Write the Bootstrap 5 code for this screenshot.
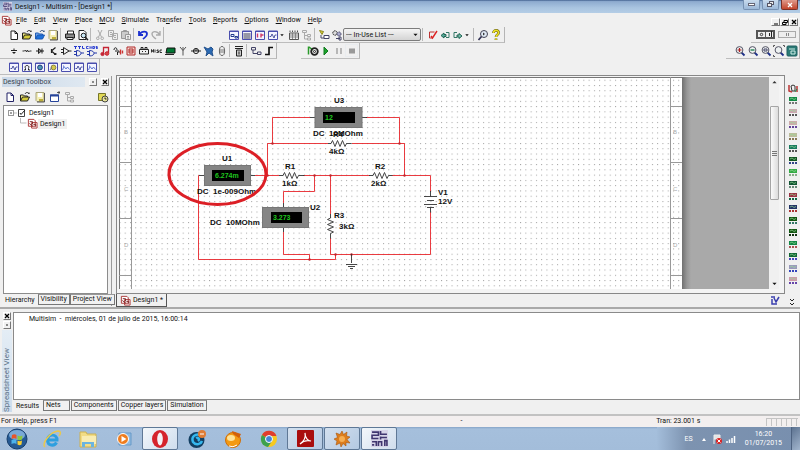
<!DOCTYPE html>
<html lang="en">
<head>
<meta charset="utf-8">
<meta name="viewport" content="width=device-width, initial-scale=1">
<title>Design1 - Multisim - [Design1 *]</title>
<link href="https://cdn.jsdelivr.net/npm/bootstrap@5.3.0/dist/css/bootstrap.min.css" rel="stylesheet">
<style>
body{font:7px/10px Roboto,"Open Sans",sans-serif;color:#111;background:#f0f0f0;min-height:100vh}
button,select{font:inherit;color:inherit;background:none;border:0;padding:0;white-space:nowrap}
a{color:inherit;text-decoration:none}
svg{display:block;flex:none}
.ic{width:12px;height:12px;fill:none;stroke:#222;stroke-width:1}
.ic.s5{width:5px;height:5px}
.ic.s9{width:9px;height:9px}
.ic.s11{width:11px;height:11px}
.drop{width:4px;height:4px;margin:0 3px 0 1px}
.navy{stroke:#226}
.tb{width:13px;height:13px;display:flex;align-items:center;justify-content:center;flex:none}
.tb.apart{margin:0 3px 0 1px}
.titlebar{height:13px;padding-left:3px;gap:3px;background:linear-gradient(#42618f 0,#8eabcf 12%,#a9c4e0 60%,#b4cde6)}
.winbtns{gap:2px;padding-right:2px}
.wb{width:17px;height:10px;border:1px solid #7791b2;border-top:0;border-radius:0 0 2px 2px;background:linear-gradient(#c9dbee,#9cb8d8);display:flex;align-items:center;justify-content:center}
.wb.end{background:linear-gradient(#e09a8c,#c3452c);border-color:#7c3026}
.menubar{height:14px;padding-left:1px}
.menubar a{padding-right:7px}
.menubar u{text-underline-offset:1px}
.menus{padding-left:4px}
.trow{height:16px}
.tbar{height:16px;padding:0 1px 0 7px;border-right:1px solid #b5b5b5;border-bottom:1px solid #bdbdbd;display:flex;align-items:center}
.tbar.std{width:164px}
.tbar.main{margin-left:58px;padding:0 2px 0 5px}
.tbar.simbar{margin-left:20px;padding:0 1px 0 5px}
.tbar.switches{padding:0 3px 0 5px;gap:3px}
.vsep{width:1px;height:13px;background:#b8b8b8;margin:0 2px 0 1px;flex:none}
.uselist{width:78px;height:13px;border:1px solid #7c7c7c;border-radius:2px;background:linear-gradient(#f4f4f4,#d4d4d4);appearance:none;padding:0 2px}
.pick{display:grid}
.pick>*{grid-area:1/1}
.pick svg{justify-self:end;align-self:center;margin-right:3px;pointer-events:none}
.mdi{padding:3px 2px 0 0}
.mdi button{width:9px;height:8px;border:1px solid;border-color:#fff #777 #777 #fff;display:flex;align-items:center;justify-content:center}
.toolbox{width:110px;margin:1px 0 1px 2px;border-right:1px solid #9a9a9a}
.panelhead{height:11px;margin-right:2px}
.panelhead h2{font:inherit;font-size:7px;margin:0;padding-left:1px;color:#36424e;background:linear-gradient(90deg,#cbd9e8,#dfe8f1);line-height:10px;height:10px}
.boxtools{height:18px;padding:0 2px 2px 1px;gap:2px}
.mini{width:8px;height:8px;border:1px solid;border-color:#fff #777 #777 #fff;display:flex;align-items:center;justify-content:center;flex:none}
.tree{background:#fff;border:1px solid #8c8c8c;margin:0 3px 0 1px;padding:2px 4px}
.leaf{background:#f0f0f0;padding:0 2px}
.tab{height:11px;border:1px solid #777;border-top-color:#999;line-height:9px;padding:0 2px;background:#f1f1f1}
.tab.on{border-color:transparent;height:12px}
.tabs{gap:1px}
.toolbox .tabs{gap:0}
.docs{margin-left:4px;min-width:0}
.desk{border:1px solid #888;background:#f4f4f4;padding:1px 2px 4px}
.sheet{width:563px;background:#fff}
.beyond{background:linear-gradient(90deg,#707070 0,#979797 5px,#a9a9a9 9px)}
.scroll{width:10px;background:#f0f0f0;margin-right:3px;padding:3px 0}
.thumb{height:94px;width:9px;margin-top:21px;border:1px solid #a5a5a5;border-radius:1px;background:linear-gradient(90deg,#fafafa,#dcdcdc)}
.doctab{height:13px;border:1px solid #555;border-top:0;line-height:12px;padding:0 3px;gap:2px}
.instr{width:15px;padding-top:7px}
.instr button{height:12px}
.more{order:99;width:7px;height:9px}
.sheetview{border-top:2px solid #aaa;height:105px;padding-top:3px}
.grip{width:13px;gap:1px}
.vlabel{writing-mode:vertical-rl;transform:rotate(180deg);font-size:8px;color:#5d7388;background:linear-gradient(#cddded,#e4edf5);width:10px;line-height:10px}
.log{background:#fff;border:1px solid #8a8a8a;padding:1px 15px}
.status{height:13px;margin-top:2px;padding-left:1px;background:#f3efef;border-top:2px solid #c2c2c2;line-height:11px}
.c1{width:57.5%}.c2{width:24.5%}
.locks{width:32px;border:solid #c4c4c4;border-width:1px 0 0;background:repeating-linear-gradient(90deg,#c4c4c4 0 1px,transparent 1px 5px);margin:2px 2px 1px 0}
.taskbar{height:23px;background:linear-gradient(#86a4c8 0,#a5bfdc 2px,#a3bdda)}
.task{width:36px;height:23px;display:flex;align-items:center;justify-content:center;flex:none;border:1px solid transparent}
.task.start{width:34px}
.task.open{border-color:#5f7896;background:linear-gradient(135deg,#d3e0ef,#b4c9e2);border-radius:2px;margin-right:1px}
.task.front{background:linear-gradient(135deg,#f3f7fb,#cfdded)}
.tray{background:linear-gradient(90deg,#a3bdda 0,#7d93b0 30px,#788fae);color:#fff;gap:9px;padding-left:28px}
.clock{line-height:9px}
.peek{width:9px;background:linear-gradient(135deg,#5b718f,#a2b6ce);border-left:1px solid #4d6280}
.sch text{font:bold 8px "Liberation Sans",Arial,sans-serif;fill:#111;white-space:pre}
.sch .lcd{font:bold 7px "Liberation Sans",Arial,sans-serif;fill:#1fc61f}
.sch .rule{font:6px "Liberation Sans",Arial,sans-serif;fill:#aaa}
</style>
<script src="https://cdn.jsdelivr.net/npm/bootstrap@5.3.0/dist/js/bootstrap.bundle.min.js"></script>
</head>
<body class="d-flex flex-column">
<svg width="0" height="0" class="position-absolute" aria-hidden="true"><defs>
<symbol id="new" viewBox="0 0 12 12"><path d="M3 2h4l2.500 2.500V10.500H3z" fill="#fff"/><path d="M7 2v2.500h2.500"/></symbol>
<symbol id="open" viewBox="0 0 12 12"><path d="M1.500 10V4h3l1 1h3v1.500" fill="#f5ee80"/><path d="M1.500 10l2-4h7l-2 4z" fill="#d4cb3b"/><path d="M6 3c1-2 3-2 4 0V1.500"/></symbol>
<symbol id="openb" viewBox="0 0 12 12"><path d="M1.500 10V4h3l1 1h3v1.500" fill="#71a4ea" stroke="#225db4"/><path d="M1.500 10l2-4h7l-2 4z" fill="#1e72dc" stroke="#1a57b0"/><path d="M6 3c1-2 3-2 4 0V1.500" stroke="#247"/></symbol>
<symbol id="save" viewBox="0 0 12 12"><path d="M2 1.500h8v9H3l-1-1z" fill="#f3edb6" stroke="#aaa67c"/><path d="M4 2h4v4H4z" fill="#fff" stroke="none"/><path d="M5 8h4v2.500H5z" fill="#bcae3a" stroke="none"/><path d="M10.500 2v9H3" stroke="#555"/></symbol>
<symbol id="print" viewBox="0 0 12 12"><path d="M3.500 5V2h6v3" fill="#fff"/><path d="M1.500 5h9v4h-9z" fill="#888"/><path d="M3 8.500h6v2H3z" fill="#eee"/></symbol>
<symbol id="prev" viewBox="0 0 12 12"><path d="M2 1.500h5l2 2v7H2z" fill="#fff"/><circle cx="6.500" cy="6.500" r="2.300" fill="#c8e6f4"/><path d="M8 8l3 3" stroke-width="1.500"/></symbol>
<symbol id="cut" viewBox="0 0 12 12"><g stroke="#aaa"><path d="M4 1l3.500 7M8 1L4.500 8"/><circle cx="3.800" cy="9.300" r="1.300"/><circle cx="8.200" cy="9.300" r="1.300"/></g></symbol>
<symbol id="copy" viewBox="0 0 12 12"><g stroke="#aaa" fill="#eee"><path d="M1.500 1.500h5v6h-5zM5.500 4.500h5v6h-5z"/><path d="M3 3.500h2M3 5.500h2M7 6.500h2M7 8.500h2"/></g></symbol>
<symbol id="paste" viewBox="0 0 12 12"><g stroke="#999" fill="#ccc"><path d="M1.500 2.500h7v7h-7zM3.500 1.500h3v1h-3z"/><path d="M5.500 5.500h5v5h-5z" fill="#eee"/><path d="M7 7.500h2M7 9h2"/></g></symbol>
<symbol id="undo" viewBox="0 0 12 12"><path d="M2 2v4h4M2.500 5.500C5 1.500 10 2 10 5S7.500 8.500 6 10" stroke="#1a2fd0" stroke-width="1.800"/></symbol>
<symbol id="redo" viewBox="0 0 12 12"><path d="M10 2v4H6M9.500 5.500C7 1.500 2 2 2 5S4.500 8.500 6 10" stroke="#aaa" stroke-width="1.400"/></symbol>
<symbol id="win" viewBox="0 0 12 12"><path d="M1.500 2h9v8.500h-9z" fill="#f3f4ff" stroke="#4a4eae"/><path d="M1 2.500h10" stroke="#4a4eae"/></symbol>
<symbol id="w1" viewBox="0 0 12 12"><use href="#win"/><path d="M3 5.500h3v2H3zM7 7.500h2.500v1.500H7z" stroke="#223a8c"/></symbol>
<symbol id="w2" viewBox="0 0 12 12"><use href="#win"/><path d="M2 5h8M2 7h8M2 9h8M4 4v6M6 4v6M8 4v6" stroke="#556" stroke-width=".7"/></symbol>
<symbol id="w3" viewBox="0 0 12 12"><use href="#win"/><path d="M3.500 4.500v4M7 4.500v4M7 6h2.500" stroke="#d23a66" stroke-width="1.400"/></symbol>
<symbol id="w4" viewBox="0 0 12 12"><use href="#win"/><path d="M2.500 7.500h1.500l1-2.500 2 4 1-3h1.500" stroke="#28348c" stroke-width=".8"/></symbol>
<symbol id="w5" viewBox="0 0 12 12"><use href="#win"/><path d="M4.500 9V7.500c-2-4 5-4 3 0V9M3 9h1.500M7.500 9H9" stroke="#222"/></symbol>
<symbol id="w6" viewBox="0 0 12 12"><use href="#win"/><circle cx="6" cy="6.500" r="2.400" fill="#4f9ab4" stroke="#223a7c"/></symbol>
<symbol id="w7" viewBox="0 0 12 12"><use href="#win"/><circle cx="6.500" cy="6.500" r="2.400" fill="#d6ca4a" stroke="#8a8440"/><path d="M3 9l2-3" stroke="#777"/></symbol>
<symbol id="w8" viewBox="0 0 12 12"><use href="#win"/><path d="M2.500 9l1.500-3.500 2 2.500 1.500-2 2 2.500M3 5h1" stroke="#3d5cc8" stroke-width=".8"/></symbol>
<symbol id="grid" viewBox="0 0 12 12"><path d="M1.500 4h9v6.500h-9zM2 3V1.500M4.500 3V1.500M7 3V1.500M9.500 3V1.500" stroke="#555"/><path d="M2 6h8M2 8h8M4.500 4v6M7.500 4v6" stroke="#777" stroke-width=".8"/></symbol>
<symbol id="hier" viewBox="0 0 12 12"><g stroke="#aaa"><path d="M1.500 1.500h4v2h-4zM6.500 5.500h3v2h-3zM6.500 9h3v2h-3zM3.500 4v6h3M3.500 6.500h3"/></g></symbol>
<symbol id="par" viewBox="0 0 12 12"><path d="M1.500 1.500l4 1-1.500 3z" fill="#e0d838" stroke="#8b8520"/><path d="M3 6v3h3M6 6.500h5v3H6z" fill="#fff" stroke="#446"/></symbol>
<symbol id="gears" viewBox="0 0 12 12"><circle cx="4" cy="4" r="2.200" fill="#ddd" stroke-dasharray="1.500 .6"/><circle cx="8" cy="5" r="2" fill="#aac" stroke="#446" stroke-dasharray="1.500 .6"/><path d="M5 9.500h4M8 8v3h2V8z" fill="#fff" stroke="#446"/></symbol>
<symbol id="erc" viewBox="0 0 12 12"><path d="M3.500 3h5M3.500 3v6h3V8" stroke="#b33"/><path d="M5 7l1.500 2L11 2" stroke="#d22" stroke-width="1.400"/></symbol>
<symbol id="fwd" viewBox="0 0 12 12"><path d="M2 6.500l3-2.500v1.500h2v2H5V9z" fill="#5a9" stroke="#265"/><path d="M7 3.500h3v5H7" stroke="#376"/></symbol>
<symbol id="bck" viewBox="0 0 12 12"><path d="M5 3.500H2v5h3" stroke="#376"/><path d="M10 7L7 4.500V6H5v2h2v1.500z" fill="#7ba" stroke="#265"/></symbol>
<symbol id="find" viewBox="0 0 12 12"><circle cx="7" cy="5" r="3.500" fill="#dfe9f4" stroke="#445"/><path d="M4.500 7.500L1.500 11" stroke-width="1.700" stroke="#335"/><path d="M6 3.500v3l2-1.500z" fill="#333" stroke="none"/></symbol>
<symbol id="help" viewBox="0 0 12 12"><path d="M3.500 4c0-3.500 5.500-3.500 5 0 0 2-2.500 1.500-2.500 4M6 9.500v1.500" stroke="#55500a" stroke-width="2.600"/><path d="M3.500 4c0-3.500 5.500-3.500 5 0 0 2-2.500 1.500-2.500 4M6 9.500v1.500" stroke="#ece022" stroke-width="1.600"/></symbol>
<symbol id="src" viewBox="0 0 12 12"><path d="M3 5.500h6M4.500 7.500h3M6 3.500v2M6 7v2"/></symbol>
<symbol id="res" viewBox="0 0 12 12"><path d="M1.500 6h2l1-1 1 2 1-2 1 2 1-1h2" stroke-width=".9"/></symbol>
<symbol id="dio" viewBox="0 0 12 12"><path d="M2 6h8M4.500 3.500v5l3-2.500zM8 3.500v5"/></symbol>
<symbol id="trn" viewBox="0 0 12 12"><path d="M8.500 2.500L5 5.500M5 6.500L8.500 9.500M4.500 4v4M7 9.500h1.800V8" stroke-width="1.200"/></symbol>
<symbol id="amp" viewBox="0 0 12 12"><path d="M3.500 2.500v7L9 6zM1 4.500h2.500M1 7.500h2.500M9 6h2.500"/></symbol>
<symbol id="ttl" viewBox="0 0 12 12"><path d="M3.500 5.500V11c6 0 6-5.500 0-5.500zM1 6.500h2.500M1 9.500h2.500M8 8h3" stroke="#2439aa"/><path d="M1 1.500h3M2.500 1.500v2.500M5 1.500h3M6.500 1.500v2.500M9.500 1v2.500h2" stroke="#2439d0"/></symbol>
<symbol id="cmos" viewBox="0 0 12 12"><path d="M3.500 5.500V11c6 0 6-5.500 0-5.500zM1 6.500h2.500M1 9.500h2.500M8 8h3" stroke="#2439aa"/><path d="M2.500 1.500h-2v2h2M4 4V1.500l1 1 1-1V4M7 1.500h1.500v2H7zM11.500 1.500H10v1h1.500v1H10" stroke="#2439d0" stroke-width=".9"/></symbol>
<symbol id="note" viewBox="0 0 12 12"><path d="M4.500 9V2.500h5V8" stroke="#c42434" stroke-width="1.300"/><circle cx="3.500" cy="9" r="1.600" fill="#c42434" stroke="#c42434"/><circle cx="8" cy="8.500" r="1.800" fill="#d44" stroke="#c42434"/></symbol>
<symbol id="mix" viewBox="0 0 12 12"><path d="M2 5c0-3 3-3 3 0M3 6h4v2M5.500 10V7" stroke="#222"/><path d="M8.500 4.500v5M10.500 5.500v3" stroke="#c33" stroke-width="1.400"/></symbol>
<symbol id="ind" viewBox="0 0 12 12"><path d="M2 2h8v8H2z" stroke="#b12a2a" fill="#f4d6d0"/><path d="M4 4h4v4H4zM4 6h4" stroke="#b12a2a"/></symbol>
<symbol id="pow" viewBox="0 0 12 12"><path d="M1.500 4.500h9v4.500h-9zM3 4V2.500h2V4M7 4V2.500h2V4M4 6.500h1M7 6.500h1"/></symbol>
<symbol id="misc" viewBox="0 0 12 12"><path d="M0.500 7.500v-3l1 2 1-2v3M4 4.500v3M7.500 5H6v1h1.500v1.500H5.500M11 5H9v2.500h2" stroke-width=".9"/></symbol>
<symbol id="lap" viewBox="0 0 12 12"><path d="M3 3h8v5H2z" fill="#073" stroke="#111"/><path d="M1 9.500h9"/></symbol>
<symbol id="ant" viewBox="0 0 12 12"><path d="M3 2l3 3.500L9 2M6 2v8.500" stroke="#555"/></symbol>
<symbol id="mot" viewBox="0 0 12 12"><circle cx="6" cy="6" r="2.600"/><path d="M1 6h10M4.500 5h3"/></symbol>
<symbol id="ni" viewBox="0 0 12 12"><path d="M1 2l4 2 3-2 2 2-1 3 1 4-4-3-3 3 1-4z" fill="#2a6ab4" stroke="#24518c"/></symbol>
<symbol id="conn" viewBox="0 0 12 12"><ellipse cx="6" cy="6" rx="2.600" ry="4.500" stroke="#666"/><path d="M5 4v4M7 4v4" stroke="#777"/></symbol>
<symbol id="mcu" viewBox="0 0 12 12"><path d="M3.500 5h5v6h-5zM6 6.500v3" fill="#ccc"/><path d="M2 1.500h8M2 3.500h8" stroke-width="1.200"/></symbol>
<symbol id="hb" viewBox="0 0 12 12"><path d="M1.500 2.500h4v2.500h-4zM7.500 7h3.500v2.500H7.500zM3 5v3.500h4.500" stroke="#446"/></symbol>
<symbol id="bus" viewBox="0 0 12 12"><path d="M2 9.500h4v-7h4" stroke="#111" stroke-width="1.700"/></symbol>
<symbol id="sim" viewBox="0 0 12 12"><path d="M1.500 1.500v8M2 2l4 3" stroke="#2a9a2a" stroke-width="1.500"/><circle cx="7.500" cy="6.500" r="3.300" stroke-width="1.800"/><circle cx="7.500" cy="6.500" r="1"/></symbol>
<symbol id="run" viewBox="0 0 12 12"><path d="M4 2v8l4-4z" fill="#1ba32c" stroke="#137a20"/></symbol>
<symbol id="pau" viewBox="0 0 12 12"><path d="M4 3v6M8 3v6" stroke="#aaa" stroke-width="1.600"/></symbol>
<symbol id="stp" viewBox="0 0 12 12"><path d="M3 3.500h6v5H3z" fill="#999" stroke="none"/></symbol>
<symbol id="mag" viewBox="0 0 12 12"><path d="M7.500 7.500l3 3" stroke="#1d2f88" stroke-width="1.800"/><circle cx="5.500" cy="5" r="3.400" fill="#eef2f2" stroke="#556"/></symbol>
<symbol id="zin" viewBox="0 0 12 12"><use href="#mag"/><path d="M3.500 5h4M5.500 3v4" stroke="#a22" stroke-width="1.200"/></symbol>
<symbol id="zout" viewBox="0 0 12 12"><use href="#mag"/><path d="M3.500 5h4" stroke="#174" stroke-width="1.300"/></symbol>
<symbol id="zar" viewBox="0 0 12 12"><use href="#mag"/><path d="M4 4h3v2H4z" stroke="#446"/></symbol>
<symbol id="zfit" viewBox="0 0 12 12"><use href="#mag"/><path d="M.5 2V.5H2M10 .5h1.500V2M.5 10v1.500H2" stroke="#555"/></symbol>
<symbol id="full" viewBox="0 0 12 12"><rect x="1" y="1" width="10" height="10" rx="1" fill="#2b7a75" stroke="#1f5f60"/><path d="M3 4h6M5 6h4v3H5z" stroke="#cfeee8"/></symbol>
<symbol id="dsn" viewBox="0 0 12 12"><path d="M1.500 1.500h6l1.500 1.500v6h-7.500zM5 5h6v6H5z" fill="#fff" stroke="#a33"/><path d="M3 4h3v3M2.500 6l4 3M7 7h2.500v2.500" stroke="#722"/></symbol>
<symbol id="bluew" viewBox="0 0 12 12"><path d="M1.500 4h8v6.500h-8z" fill="#fff" stroke="#26449a"/><path d="M1 4.500h9" stroke="#26449a" stroke-width="2"/><path d="M8 1.500h3M10 0v3" stroke="#333" stroke-width=".8"/></symbol>
<symbol id="clk" viewBox="0 0 12 12"><path d="M1.500 2.500h7v7h-7z" fill="#e1d956" stroke="#777528"/><circle cx="8" cy="8" r="3" fill="#e8e49a" stroke="#444"/><path d="M8 6.500V8h1.500"/></symbol>
<symbol id="x" viewBox="0 0 6 6"><path d="M1 1l4 4M5 1L1 5" stroke-width="1.300"/></symbol>
<symbol id="dn" viewBox="0 0 6 6"><path d="M.500 2h5L3 4.800z" fill="#111" stroke="none"/></symbol>
<symbol id="up" viewBox="0 0 6 6"><path d="M.500 4h5L3 1.200z" fill="#333" stroke="none"/></symbol>
<symbol id="ms" viewBox="0 0 16 16"><rect width="16" height="16" fill="#d7d4e8" stroke="none"/><path d="M1 2h6v3H1v3h6M9 1v3h6M9 7h6M9 9V6M1 11h4v4M7 15v-4h3v4M13 15v-5h2v5M1 14h2" stroke="#40366f" stroke-width="1.500"/></symbol>
</defs></svg>

<header class="titlebar d-flex align-items-center">
 <svg class="ic s9"><use href="#ms"/></svg><span>Design1 - Multisim - [Design1 *]</span>
 <div class="winbtns ms-auto d-flex align-self-start">
  <button class="wb" aria-label="Minimize"><svg width="7" height="4"><rect x=".5" y=".5" width="6" height="2" fill="#fff" stroke="#667"/></svg></button>
  <button class="wb" aria-label="Restore"><svg width="7" height="7" fill="#eee" stroke="#556"><rect x="2.500" y=".5" width="4" height="3"/><rect x=".5" y="2.500" width="4" height="3"/></svg></button>
  <button class="wb end" aria-label="Close"><svg width="6" height="6" stroke="#fff"><use href="#x"/></svg></button>
 </div>
</header>
<nav class="menubar d-flex align-items-center">
 <svg class="ic s11"><use href="#dsn"/></svg>
 <div class="menus d-flex"><a href="#"><u>F</u>ile</a><a href="#"><u>E</u>dit</a><a href="#"><u>V</u>iew</a><a href="#"><u>P</u>lace</a><a href="#"><u>M</u>CU</a><a href="#"><u>S</u>imulate</a><a href="#">Tra<u>n</u>sfer</a><a href="#"><u>T</u>ools</a><a href="#"><u>R</u>eports</a><a href="#"><u>O</u>ptions</a><a href="#"><u>W</u>indow</a><a href="#"><u>H</u>elp</a></div>
 <div class="mdi ms-auto d-flex"><button aria-label="Minimize document"><svg width="6" height="6"><path d="M1 5h4" stroke="#000"/></svg></button><button aria-label="Restore document"><svg width="6" height="6" fill="none" stroke="#000"><path d="M2 1.500h3.500v2H2zM.5 3.500H4v2H.5z"/></svg></button><button aria-label="Close document"><svg width="6" height="6" stroke="#000"><use href="#x"/></svg></button></div>
</nav>

<div class="trow d-flex">
 <div class="tbar std">
  <button class="tb" aria-label="New"><svg class="ic"><use href="#new"/></svg></button><button class="tb" aria-label="Open"><svg class="ic"><use href="#open"/></svg></button><button class="tb" aria-label="Open sample"><svg class="ic"><use href="#openb"/></svg></button><button class="tb" aria-label="Save"><svg class="ic"><use href="#save"/></svg></button><i class="vsep"></i>
  <button class="tb" aria-label="Print"><svg class="ic"><use href="#print"/></svg></button><button class="tb" aria-label="Print preview"><svg class="ic"><use href="#prev"/></svg></button><i class="vsep"></i>
  <button class="tb" aria-label="Cut"><svg class="ic"><use href="#cut"/></svg></button><button class="tb" aria-label="Copy"><svg class="ic"><use href="#copy"/></svg></button><button class="tb" aria-label="Paste"><svg class="ic"><use href="#paste"/></svg></button><i class="vsep"></i>
  <button class="tb" aria-label="Undo"><svg class="ic"><use href="#undo"/></svg></button><button class="tb" aria-label="Redo"><svg class="ic"><use href="#redo"/></svg></button>
 </div>
 <div class="tbar main">
  <button class="tb" aria-label="Design toolbox"><svg class="ic"><use href="#w1"/></svg></button><button class="tb" aria-label="Spreadsheet view"><svg class="ic"><use href="#w2"/></svg></button><button class="tb" aria-label="SPICE netlist viewer"><svg class="ic"><use href="#w3"/></svg></button><button class="tb" aria-label="Grapher"><svg class="ic"><use href="#w4"/></svg></button><svg class="drop"><use href="#dn"/></svg>
  <button class="tb" aria-label="Postprocessor"><svg class="ic"><use href="#grid"/></svg></button><button class="tb" aria-label="Parent sheet"><svg class="ic"><use href="#hier"/></svg></button><i class="vsep"></i>
  <button class="tb" aria-label="Component wizard"><svg class="ic"><use href="#par"/></svg></button><button class="tb" aria-label="Database manager"><svg class="ic"><use href="#gears"/></svg></button>
  <div class="pick"><select class="uselist" aria-label="In-Use List"><option>--- In-Use List ---</option></select><svg class="ic s5"><use href="#dn"/></svg></div><i class="vsep"></i>
  <button class="tb" aria-label="Electrical rules check"><svg class="ic"><use href="#erc"/></svg></button><button class="tb" aria-label="Back annotate"><svg class="ic"><use href="#fwd"/></svg></button><button class="tb" aria-label="Forward annotate"><svg class="ic"><use href="#bck"/></svg></button><svg class="drop"><use href="#dn"/></svg><i class="vsep"></i>
  <button class="tb" aria-label="Find examples"><svg class="ic"><use href="#find"/></svg></button><button class="tb" aria-label="Help"><svg class="ic"><use href="#help"/></svg></button>
 </div>
 <div class="tbar switches ms-auto">
  <button aria-label="Simulation switch"><svg width="19" height="9" fill="none"><rect width="19" height="9" fill="#555"/><path d="M2 2h7v5H2zM10 2h7v5h-7z" fill="#eee"/><circle cx="5.500" cy="4.500" r="1.200" stroke="#333"/><path d="M13.500 3v3M15.500 1v6" stroke="#222"/></svg></button>
  <button aria-label="Pause switch"><svg width="18" height="9" fill="none"><rect x=".5" y="1.500" width="17" height="6" fill="#eee" stroke="#aaa"/><path d="M8.500 3v3M10.500 3v3" stroke="#888"/></svg></button>
 </div>
</div>

<div class="trow d-flex">
 <div class="tbar">
  <button class="tb" aria-label="Source"><svg class="ic"><use href="#src"/></svg></button><button class="tb" aria-label="Basic"><svg class="ic"><use href="#res"/></svg></button><button class="tb" aria-label="Diode"><svg class="ic"><use href="#dio"/></svg></button><button class="tb" aria-label="Transistor"><svg class="ic"><use href="#trn"/></svg></button><button class="tb" aria-label="Analog"><svg class="ic"><use href="#amp"/></svg></button><button class="tb" aria-label="TTL"><svg class="ic"><use href="#ttl"/></svg></button><button class="tb" aria-label="CMOS"><svg class="ic"><use href="#cmos"/></svg></button><button class="tb" aria-label="Misc digital"><svg class="ic"><use href="#note"/></svg></button><button class="tb" aria-label="Mixed"><svg class="ic"><use href="#mix"/></svg></button><button class="tb" aria-label="Indicator"><svg class="ic"><use href="#ind"/></svg></button><button class="tb" aria-label="Power"><svg class="ic"><use href="#pow"/></svg></button><button class="tb" aria-label="Misc"><svg class="ic"><use href="#misc"/></svg></button><button class="tb" aria-label="Advanced peripherals"><svg class="ic"><use href="#lap"/></svg></button><button class="tb" aria-label="RF"><svg class="ic"><use href="#ant"/></svg></button><button class="tb" aria-label="Electromechanical"><svg class="ic"><use href="#mot"/></svg></button><button class="tb" aria-label="NI component"><svg class="ic"><use href="#ni"/></svg></button><button class="tb" aria-label="Connector"><svg class="ic"><use href="#conn"/></svg></button><i class="vsep"></i><button class="tb" aria-label="MCU"><svg class="ic"><use href="#mcu"/></svg></button><i class="vsep"></i><button class="tb" aria-label="Hierarchical block"><svg class="ic"><use href="#hb"/></svg></button><button class="tb" aria-label="Bus"><svg class="ic"><use href="#bus"/></svg></button>
 </div>
 <div class="tbar simbar ms-4">
  <button class="tb" aria-label="Interactive simulation"><svg class="ic"><use href="#sim"/></svg></button><button class="tb" aria-label="Run"><svg class="ic"><use href="#run"/></svg></button><button class="tb" aria-label="Pause"><svg class="ic"><use href="#pau"/></svg></button><button class="tb border border-secondary-subtle" aria-label="Stop"><svg class="ic"><use href="#stp"/></svg></button>
 </div>
 <div class="tbar ms-auto">
  <button class="tb" aria-label="Zoom in"><svg class="ic"><use href="#zin"/></svg></button><button class="tb" aria-label="Zoom out"><svg class="ic"><use href="#zout"/></svg></button><button class="tb" aria-label="Zoom area"><svg class="ic"><use href="#zar"/></svg></button><button class="tb" aria-label="Zoom to fit"><svg class="ic"><use href="#zfit"/></svg></button><button class="tb" aria-label="Full screen"><svg class="ic"><use href="#full"/></svg></button>
 </div>
</div>

<div class="trow d-flex">
 <div class="tbar">
  <button class="tb" aria-label="Probe 1"><svg class="ic"><use href="#w4"/></svg></button><button class="tb" aria-label="Probe 2"><svg class="ic"><use href="#w5"/></svg></button><button class="tb" aria-label="Probe 3"><svg class="ic"><use href="#w6"/></svg></button><button class="tb" aria-label="Probe 4"><svg class="ic"><use href="#w7"/></svg></button><button class="tb" aria-label="Probe 5"><svg class="ic"><use href="#w8"/></svg></button><button class="tb" aria-label="Probe 6"><svg class="ic"><use href="#w4"/></svg></button><button class="tb" aria-label="Probe 7"><svg class="ic"><use href="#w8"/></svg></button>
 </div>
</div>

<main class="d-flex flex-fill">
 <aside class="toolbox d-flex flex-column">
  <div class="panelhead d-flex gap-1 align-items-center"><h2 class="flex-fill">Design Toolbox</h2><button class="mini" aria-label="Options"><svg width="6" height="6"><path d="M2 3h2" stroke="#222"/></svg></button><button class="mini" aria-label="Close toolbox"><svg width="6" height="6" stroke="#000"><use href="#x"/></svg></button></div>
  <div class="boxtools d-flex align-items-end">
   <button class="tb" aria-label="New design"><svg class="ic navy"><use href="#new"/></svg></button><button class="tb" aria-label="Open design"><svg class="ic"><use href="#open"/></svg></button><button class="tb" aria-label="Save design"><svg class="ic"><use href="#save"/></svg></button><button class="tb" aria-label="Close design"><svg class="ic"><use href="#bluew"/></svg></button><button class="tb" aria-label="Rename"><svg class="ic"><use href="#hier"/></svg></button><button class="tb ms-auto" aria-label="History"><svg class="ic"><use href="#clk"/></svg></button>
  </div>
  <div class="tree flex-fill">
   <div class="d-flex align-items-center"><svg width="21" height="10" fill="none"><rect x=".5" y="2.500" width="5" height="5" stroke="#999"/><path d="M2 5h2" stroke="#444"/><path d="M6 5h3" stroke="#bbb"/><path d="M10.500 1.500h6v7h-6z" stroke="#444"/><path d="M12 5l1 1.500L17 2" stroke="#222"/></svg>Design1</div>
   <div class="d-flex align-items-center"><svg width="30" height="11" fill="none"><path d="M12.500 0v5h6" stroke="#bbb"/><use href="#dsn" x="19" width="11" height="11"/></svg><span class="leaf">Design1</span></div>
  </div>
  <div class="tabs d-flex" role="tablist"><button class="tab on" role="tab">Hierarchy</button><button class="tab" role="tab">Visibility</button><button class="tab" role="tab">Project View</button></div>
 </aside>
 <section class="docs flex-fill d-flex flex-column">
  <div class="desk d-flex flex-fill">
   <svg class="sch sheet" viewBox="119 77 563 212" height="212" preserveAspectRatio="xMinYMin slice" fill="none">
    <defs><pattern id="dots" x="272.300" y="143" width="5.272" height="5.272" patternUnits="userSpaceOnUse"><rect width="1" height="1" fill="#a0a0a0"/></pattern></defs>
    <rect x="119" y="77" width="563" height="212" fill="url(#dots)"/>
    <path d="M119.500 289V77.500H682" stroke="#777"/>
    <path d="M131.500 77v212M119 106.500h12M119 162.500h12M119 218.500h12M119 275.500h12M670.500 77v212M670 106.500h12M670 162.500h12M670 218.500h12M670 275.500h12" stroke="#999"/>
    <text class="rule" x="124" y="134">B</text><text class="rule" x="124" y="191">C</text><text class="rule" x="124" y="247">D</text><text class="rule" x="673" y="134">B</text><text class="rule" x="673" y="191">C</text><text class="rule" x="673" y="247">D</text>
    <g stroke="#e8262b" stroke-width=".9"><path d="M310 117.500H272.500V143.500M366 117.500H399.500V143.500M328 143.500H267.500V175.500M352 143.500H404.500V175.500M255 175.500H279M303 175.500H370M392 175.500H430.500V192M430.500 212V254.500H330.500V238M330.500 175.500V214M314.500 175.500V191.500H283.500V203M283.500 232V254.500H309.500V259.500M199 175.500H198.500V259.500H335.500V254.500"/></g>
    <g fill="#c1272d"><circle cx="272.500" cy="143.500" r="1.200"/><circle cx="399.500" cy="143.500" r="1.200"/><circle cx="267.500" cy="175.500" r="1.200"/><circle cx="314.500" cy="175.500" r="1.200"/><circle cx="330.500" cy="175.500" r="1.200"/><circle cx="404.500" cy="175.500" r="1.200"/><circle cx="309.500" cy="259.500" r="1.200"/><circle cx="335.500" cy="254.500" r="1.200"/><circle cx="351.500" cy="254.500" r="1.200"/></g>
    <g stroke="#333" stroke-width=".9"><path d="M328 143.500h3l1.500-3 2.500 6 2.500-6 2.500 6 2.500-6 2.500 6 1.500-3h5M279 175.500h4l1.500-3 2.500 6 2.500-6 2.500 6 2.500-6 2.500 6 1.500-3h6M369 175.500h4l1.500-3 2.500 6 2.500-6 2.500 6 2.500-6 2.500 6 1.500-3h4M330.500 214v4l-3 1.500 6 2.500-6 2.500 6 2.500-6 2.500 6 2.500-3 1.500v5"/><path d="M430.500 191v5.500M424 196.500h13M427 200.500h7M424 204.500h13M427 207.500h7M430.500 207.500v5M351.500 254v9M346 264.500h11M348 266.500h7M350 268.500h3M310 117.500h5M362 117.500h5M199 175.500h6M250 175.500h5M283.500 203v4M283.500 228v4"/></g>
    <g fill="#858585" stroke="#777"><rect x="315" y="107.500" width="47" height="20"/><rect x="204.500" y="165.500" width="46" height="20"/><rect x="262.500" y="207.500" width="46" height="20"/></g>
    <g fill="#000"><rect x="323" y="112" width="32" height="11"/><rect x="212" y="170" width="32" height="11"/><rect x="271" y="212" width="31" height="11"/></g>
    <text class="lcd" x="325" y="120">12</text><text class="lcd" x="215" y="178">6.274m</text><text class="lcd" x="273" y="220">3.273</text>
    <text x="334" y="103">U3</text><text x="313" y="136">DC  10MOhm</text><text x="333" y="137">R4</text><text x="329" y="154">4kΩ</text><text x="222" y="161">U1</text><text x="197" y="194">DC  1e-009Ohm</text><text x="285" y="169">R1</text><text x="282" y="186">1kΩ</text><text x="310" y="210">U2</text><text x="210" y="225">DC  10MOhm</text><text x="375" y="169">R2</text><text x="371" y="186">2kΩ</text><text x="438" y="195">V1</text><text x="438" y="204">12V</text><text x="334" y="218">R3</text><text x="339" y="229">3kΩ</text>
    <ellipse cx="217.500" cy="174" rx="48.500" ry="30.500" stroke="#dc1f26" stroke-width="3"/>
   </svg>
   <div class="beyond flex-fill"></div>
   <div class="scroll d-flex flex-column align-items-center"><svg class="ic s5"><use href="#up"/></svg><div class="thumb d-flex align-items-center justify-content-center"><svg width="5" height="5" stroke="#777"><path d="M0 .5h5M0 2.500h5M0 4.500h5"/></svg></div><svg class="ic s5 mt-auto"><use href="#dn"/></svg></div>
  </div>
  <div class="d-flex"><button class="doctab d-flex align-items-center"><svg class="ic s11"><use href="#dsn"/></svg>Design1 *</button><svg class="ic ms-auto me-1" fill="none"><path d="M2 3h4M3 5v5h5M5 4l2 4 3-5" stroke="#3a3fae" stroke-width="1.500"/></svg></div>
 </section>
 <aside class="instr d-flex flex-column align-items-center" id="instruments"><svg class="ic more mt-auto"><path d="M1 1l2 2 2-2M1 5l2 2 2-2"/></svg></aside>
</main>

<section class="sheetview d-flex">
 <div class="grip d-flex flex-column align-items-center"><button class="mini" aria-label="Close view"><svg width="6" height="6" stroke="#000"><use href="#x"/></svg></button><button class="mini" aria-label="View options"><svg width="6" height="6"><path d="M2 3h2" stroke="#222"/></svg></button><div class="vlabel flex-fill">Spreadsheet View</div></div>
 <div class="flex-fill d-flex flex-column">
  <div class="log flex-fill">Multisim&nbsp; -&nbsp; miércoles, 01 de julio de 2015, 16:00:14</div>
  <div class="tabs d-flex" role="tablist"><button class="tab on" role="tab">Results</button><button class="tab pe-2" role="tab">Nets</button><button class="tab" role="tab">Components</button><button class="tab" role="tab">Copper layers</button><button class="tab" role="tab">Simulation</button></div>
 </div>
</section>
<footer class="status d-flex"><span class="c1">For Help, press F1</span><span class="c2">-</span><span>Tran: 23.001 s</span><span class="locks ms-auto"></span></footer>

<nav class="taskbar d-flex" aria-label="Taskbar">
 <button class="task start" aria-label="Start"><svg width="22" height="22" viewBox="0 0 22 22"><circle cx="11" cy="11" r="10" fill="#255a94" stroke="#173e6c"/><ellipse cx="11" cy="7" rx="8" ry="5" fill="#79a9d6"/><path d="M6 7c2-1 3-1 4.500 0v4C9 10 7.500 10 5.500 11z" fill="#e8552a"/><path d="M11.500 7.500c2 1 3 1 5 0l-.5 4c-2 1-3 1-4.500 0z" fill="#8cc63e"/><path d="M5.500 12c2-1 3.500-1 5 0v4c-1.500-1-3-1-5 0z" fill="#4db2ea"/><path d="M11.500 12.500c1.500 1 3 1 4.500 0l-.5 4c-1.500 1-2.500 1-4 0z" fill="#f8cf33"/></svg></button>
 <button class="task" aria-label="Internet Explorer"><svg width="20" height="20" viewBox="0 0 20 20" fill="none"><path d="M6 11h9c.5-6-9-7-9.500 0 0 6 7 6.500 9 2.500" stroke="#2d9fdf" stroke-width="3"/><path d="M3 18C-1 15 8 3 16 2c4 0 2 4 1 5" stroke="#e9c84c" stroke-width="1.500"/></svg></button>
 <button class="task" aria-label="Explorer"><svg width="20" height="20" viewBox="0 0 20 20"><path d="M2 3h6l1 2h9v13H2z" fill="#f2dc85" stroke="#cdb152"/><path d="M4 7h14v8H4z" fill="#f9ecb2"/><path d="M4 18v-5h12v5h-3v-3H7v3z" fill="#6bb4e0"/></svg></button>
 <button class="task" aria-label="Media Player"><svg width="18" height="18" viewBox="0 0 18 18"><path d="M4 3h12v12H4z" fill="#8fbbe2" stroke="#6699c7"/><circle cx="8" cy="9" r="5.500" fill="#ef7d1e" stroke="#fff"/><path d="M6.500 6v6l5-3z" fill="#fff"/></svg></button>
 <button class="task open front" aria-label="Opera"><svg width="20" height="20" viewBox="0 0 20 20"><ellipse cx="10" cy="10" rx="8" ry="9" fill="#d5232c"/><ellipse cx="10" cy="10" rx="2.800" ry="6.500" fill="#f4f1f5"/></svg></button>
 <button class="task" aria-label="Cleaner"><svg width="20" height="20" viewBox="0 0 20 20" fill="none"><circle cx="9.500" cy="11" r="8" fill="#123f62"/><path d="M14 6c-6-2-10 2-8 7 3 4 8 2 9-1M9 9c2-1 4 1 2 3" stroke="#35b7ee" stroke-width="2.500"/><circle cx="15" cy="5" r="4" fill="#e07d35"/><path d="M13 5h4" stroke="#fff"/></svg></button>
 <button class="task" aria-label="Utility"><svg width="20" height="20" viewBox="0 0 20 20"><circle cx="10" cy="11" r="7.500" fill="#f39a14" stroke="#d16f08"/><ellipse cx="8" cy="9" rx="4" ry="3" fill="#fde39a"/><path d="M9 2l9 3-2 4-6-4z" fill="#d2600c"/><path d="M6 17q4 2 8-1" stroke="#fff" fill="none"/></svg></button>
 <button class="task" aria-label="Chrome"><svg width="18" height="18" viewBox="0 0 18 18"><circle cx="9" cy="9" r="8" fill="#f7c920"/><path d="M9 9L2 5a8 8 0 0 1 14.500 1H9z" fill="#df3d2e"/><path d="M9 9L2 5a8 8 0 0 0 6 12l4-6z" fill="#3da14d"/><circle cx="9" cy="9" r="3.500" fill="#4285d8" stroke="#fff"/></svg></button>
 <button class="task open" aria-label="Adobe Reader"><svg width="17" height="17" viewBox="0 0 17 17"><rect width="17" height="17" rx="1" fill="#a90d0d"/><path d="M3 14C7 11 9 7 8 3c0 5 3 8 6 8-4-1-8 0-11 3" fill="none" stroke="#fff" stroke-width="1.200"/></svg></button>
 <button class="task open" aria-label="Sun"><svg width="18" height="18" viewBox="0 0 18 18"><path d="M9 1l1.500 3.500L14 2l-.5 4L17 7l-3 2.500L17 13l-4-.5L13 16l-3-2.500L8 17l-1-4-4 2 1-4-3-2 3.500-1.500L3 3l4 1.500z" fill="#dd7d1c" stroke="#a9560e" stroke-width=".6"/><circle cx="9" cy="9" r="3" fill="#f6ae52"/></svg></button>
 <button class="task open front" aria-label="Multisim"><svg width="17" height="17" fill="none"><use href="#ms"/></svg></button>
 <div class="tray ms-auto d-flex align-items-center"><span>ES</span>
  <svg width="34" height="12" fill="none"><path d="M0 8l2-3 2 3z" fill="#fff"/><path d="M12 2h6v4h-6M12 2v9" fill="#e4e4e4" stroke="#eee"/><circle cx="17" cy="8" r="3" fill="#d22"/><path d="M15.500 6.500l3 3M18.500 6.500l-3 3" stroke="#fff"/><path d="M25 10V8M27.500 10V6.500M30 10V5M32.500 10V3" stroke="#fff" stroke-width="1.500"/></svg>
  <div class="clock text-center">16:20<br>01/07/2015</div><span class="peek align-self-stretch"></span></div>
</nav>
<script>
// Instrument palette: [display colour, body colour] for each bench instrument
const kinds=[["Multimeter","#b33","#333"],["Function generator","#184","#777"],["Wattmeter","#c9a5ad","#555"],["Oscilloscope","#caa","#649"],["Four channel scope","#bb9","#875"],["Bode plotter","#197a5f","#555"],["Frequency counter","#152","#348"],["Word generator","#3a4","#8a8"],["Logic converter","#153","#687"],["Logic analyzer","#934","#164"],["IV analyzer","#236","#a33"],["Distortion analyzer","#151","#376"],["Spectrum analyzer","#151","#131"],["Network analyzer","#184","#a55"],["Agilent generator","#163","#44b"],["Agilent multimeter","#99b","#34b"],["Probe","#c9a","#64a"]];
document.getElementById("instruments").insertAdjacentHTML("afterbegin",kinds.map(([n,a,b],i)=>`<button class="tb" aria-label="${n}"><svg width="10" height="9" fill="none">${i?`<rect x="1" y="1" width="8" height="4" fill="${a}"/><path d="M2 3l2-1 2 1.500 2-1" stroke="#9d9" stroke-width=".7"/><path d="M1 7h2M4 7h2M7 7h2" stroke="${b}" stroke-width="2"/>`:`<path d="M1 1v6l3 1M9 2v6" stroke="#b33" stroke-width="1.500"/><path d="M3 2l2-1 2 1v5H4z" stroke="#333"/><path d="M7 8l2-3" stroke="#284"/>`}</svg></button>`).join(""));
</script>
</body>
</html>
